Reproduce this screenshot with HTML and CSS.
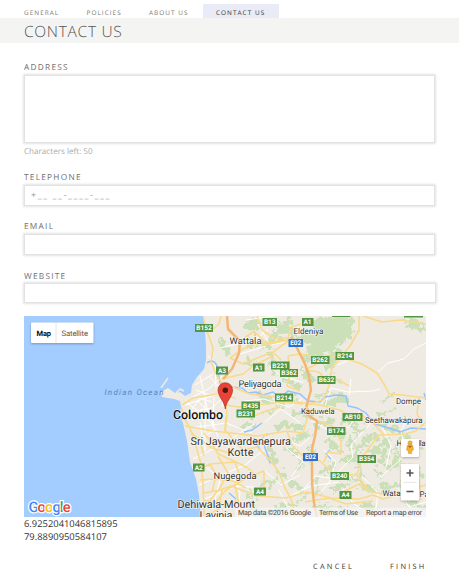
FILE: index.html
```html
<!DOCTYPE html>
<html lang="en">
<head>
<meta charset="utf-8">
<title>Contact us</title>
<link rel="stylesheet" href="styles.css">
</head>
<body>
<nav class="tabs">
  <a class="tab tab-general">GENERAL</a>
  <a class="tab tab-policies">POLICIES</a>
  <a class="tab tab-about">ABOUT US</a>
  <a class="tab active">CONTACT US</a>
</nav>
<h1 class="title">CONTACT US</h1>
<main class="form">
  <label class="label">ADDRESS</label>
  <div class="box area"></div>
  <p class="hint">Characters left: 50</p>
  <label class="label telephone">TELEPHONE</label>
  <div class="box">+__ __-____-___</div>
  <label class="label email">EMAIL</label>
  <div class="box"></div>
  <label class="label website">WEBSITE</label>
  <div class="box wide"></div>
  <svg class="map" viewBox="24 316 402 201" width="402" height="201">
    <defs>
      <filter id="rough" x="-5%" y="-5%" width="110%" height="110%">
        <feTurbulence type="fractalNoise" baseFrequency=".16" numOctaves="3" seed="7"/>
        <feDisplacementMap in="SourceGraphic" scale="16" xChannelSelector="R" yChannelSelector="G"/>
      </filter>
      <clipPath id="land-clip"><path id="land" d="M203 316L205 331L206 346L206 360L204 369L197 377L192 385L191 393L185 396L180 392L175 393L168 388L161 392L162 397L174 399L180 401L181 407L180 414L183 423L187 441L190 462L196 479L199 495L201 517H426V316Z"/></clipPath>
    </defs>
    <rect class="sea" x="24" y="316" width="402" height="201"/>
    <use href="#land" class="land"/>
    <path class="jetty" d="M161 388L168 378M176 393L180 389L184 391"/>
    <g clip-path="url(#land-clip)">
      <g class="park" filter="url(#rough)">
        <path stroke-width="18" d="M320 326L342 322M318 346L346 331"/>
        <path stroke-width="9" d="M249 325L256 323M250 342L270 345M275 338L285 326M308 358L322 350M410 322L421 327M334 350L328 366M313 336L300 340M287 322L292 335"/>
        <path stroke-width="6" d="M246 360L255 366M271 357L276 374M287 380L300 387M304 372L314 382M259 397L270 401M278 404L292 398M293 412L310 416M326 404L346 397M279 426L300 426M296 440L308 435M318 425L330 421M345 420L361 430M363 442L375 435M370 452L388 443M381 425L398 431M402 437L420 447M328 442L339 450M345 460L355 455M322 473L333 465M297 469L304 459M292 482L300 490M269 450L274 462M278 471L285 477M263 484L274 481M332 489L348 483M356 480L371 489M388 467L397 460M382 488L398 485M402 465L421 473M406 502L424 507M315 507L346 512M364 505L377 509M276 508L296 505M247 508L261 511M287 448L294 453M240 428L253 424M222 343L227 351M360 448L352 462M386 452L381 463M352 436L349 447"/>
        <path stroke-width="3" d="M378 418L390 410M402 418L416 420M357 468L364 474M374 471L381 477M336 434L343 438M310 445L312 459M315 480L318 491M348 442L357 447M393 449L401 456M318 398L331 391M383 400L393 393M332 376L338 382M264 414L272 409M266 436L262 442M249 489L255 498M301 501L307 495"/>
      </g>
      <g class="street">
        <path d="M208 356L215 362L216 388M193 397L210 388L222 376M200 376L207 408L218 437M185 405L218 394L241 386M195 385L213 374M198 401L214 418M205 394L205 451M181 413L212 408L232 389M190 428L226 423L252 433M192 443L217 429M193 459L223 444L254 424M199 485L245 465L264 450M202 500L237 486L266 488M246 320L274 316M220 348L254 340L268 330M240 354L266 346M258 324L270 345L301 339M268 365L282 377L303 382M244 401L264 399L289 407L302 399M265 422L281 409L303 425M289 441L300 446L309 438M286 448L303 461L291 477M264 470L281 485L300 475M279 490L287 506L305 511M209 376L224 392L222 407M205 466L220 479L213 508M232 474L240 493L237 512M187 403L201 413L213 425M190 412L200 398L212 402M192 420L203 409M210 395L196 390M200 422L203 443M214 397L213 428"/>
        <path d="M378 372L388 363L404 359L414 349L426 343M348 392L373 391L380 389M351 379L349 395M325 406L331 388L348 392M311 420L331 432L349 427L360 410M373 421L351 445L353 457L336 474L321 492M383 428L391 446L386 467M378 479L398 462L410 450M324 450L336 462L329 483M343 489L354 504L370 514M303 490L315 476L330 478M398 488L409 507L426 502M362 476L378 493L375 516M408 417L401 431L404 446M338 365L347 361M290 496L311 486L339 482"/>
      </g>
      <path class="water" d="M207 363C213 358 217 363 218 371L220 383L230 387L242 388L248 393L256 392L263 395L273 392L280 398L288 391L300 394L308 401L320 402L325 397L337 395L346 396L348 406L357 408L366 413L374 424L389 428L400 432L411 428L426 429M257 441L264 445L268 456L270 463M244 432L252 430L262 423M254 438L260 450M229 493L236 499M331 459L326 454L330 450M424 393L426 400"/>
      <g class="road">
        <path d="M203 316L207 331L213 348L211 362L217 376L221 382M221 316L219 324L212 330M242 340L254 331L266 343L288 340M228 329L239 342M257 316L262 330L274 338L288 338L291 327L301 324M230 358L243 349L255 344L270 344L288 340M230 358L243 364L260 357L273 352L288 341M222 379L243 374L253 366L273 356M288 356L300 354L320 357L340 357M222 383L235 388L250 394L270 396L303 403L320 405L340 410L352 417L369 422M221 382L225 388L226 405L238 407L265 404L284 402L303 404M288 356L290 371L287 386L300 391M273 352L281 360M226 405L227 416L225 431M238 415L252 417L263 412L280 407M305 370L318 363L327 355"/>
        <path d="M359 316L359 330L350 346L340 358L332 368L329 386L323 400L306 405M347 359L362 364L377 373L384 384L389 394L402 395L426 398M419 398L417 414L423 426M363 316L382 322L401 320L426 324M326 376L339 380L349 386M306 370L319 372L328 383"/>
        <path d="M182 405L193 398L205 396L217 394M181 407L185 420L190 428L196 446L201 464L203 483L204 516M185 426L213 431L240 434L257 436L287 431L303 433L307 419M204 433L213 445L218 454L234 461L248 468L257 477M190 430L201 445L204 456M192 434L212 448L226 452L243 450L257 447L270 460L279 472L285 488L291 499L295 513M243 450L232 438L225 430L226 416M196 471L210 464L222 463L235 462M200 480L215 479L233 481L246 488M204 493L220 490L231 486L244 491L259 496L286 498L307 492L331 498L359 499L373 495L383 499L405 492L426 485M218 456L228 473L220 488L203 509M235 462L240 476L235 486L239 504L244 516M211 508L225 491L246 478L264 471L264 495M287 431L292 445L303 456M204 500L225 505L238 500M205 516L219 509L222 490M210 464L216 475L212 492M229 397L236 398"/>
        <path d="M312 459L320 461L334 474L357 475L369 491L391 496M357 475L362 457L379 435L405 434L416 431L426 422M324 462L328 452L341 454L341 442L334 427L318 421M305 502L329 498L346 504L373 501M339 494L359 484L370 492M384 435L374 424L360 414M411 464L419 480L421 500"/>
      </g>
      <path class="highway" d="M227 316L228 329L240 341L239 353L232 369L223 379M291 337L296 346L305 364L309 376L311 390L307 404L305 413L317 421L315 436L312 449L312 483L314 503L317 517"/>
    </g>
    <g class="shields">
      <rect x="195" y="324" width="18" height="8"/><rect x="262.500" y="318" width="14.500" height="8"/><rect x="302" y="318" width="11.500" height="8"/><rect x="216" y="366.500" width="12" height="8"/><rect x="253" y="363.500" width="11.500" height="8"/><rect x="271" y="361.500" width="18.500" height="8"/><rect x="280" y="369" width="18" height="8"/><rect x="311" y="356" width="18.500" height="8"/><rect x="335.500" y="352" width="18.500" height="8"/><rect x="317.500" y="376" width="18" height="8"/><rect x="275" y="393.500" width="18" height="8"/><rect x="241.500" y="401.500" width="18.500" height="8"/><rect x="236.500" y="409.500" width="18.500" height="8"/><rect x="342.500" y="413" width="20" height="8"/><rect x="327" y="427" width="18.500" height="8"/><rect x="357.500" y="455" width="18.500" height="8"/><rect x="330.500" y="472" width="18.500" height="8"/><rect x="193" y="463.500" width="11.500" height="8"/><rect x="254" y="487.500" width="12" height="8"/><rect x="339.500" y="491" width="12" height="8"/><rect x="332" y="316" width="18" height="1"/><rect x="404" y="316" width="19" height="1.500"/>
      <rect class="blue" x="288.500" y="339" width="14.500" height="8"/><rect class="blue" x="303" y="453" width="15" height="8"/>
    </g>
    <g class="shield-text">
      <text x="204" y="330.300">B152</text><text x="269.700" y="324.300">B13</text><text x="307.500" y="324.300">A1</text><text x="222" y="372.800">A3</text><text x="258.700" y="369.800">A1</text><text x="280" y="367.800">B221</text><text x="289" y="375.300">B362</text><text x="320" y="362.300">B262</text><text x="344.700" y="358.300">B214</text><text x="326.500" y="382.300">B632</text><text x="284" y="399.800">B214</text><text x="250.700" y="407.800">B435</text><text x="245.700" y="415.800">B231</text><text x="352.500" y="419.300">AB10</text><text x="336" y="433.300">B174</text><text x="366.700" y="461.300">B354</text><text x="339.700" y="478.300">B240</text><text x="198.700" y="469.800">A2</text><text x="260" y="493.800">A4</text><text x="345.500" y="497.300">A4</text><text x="295.700" y="345.300">E02</text><text x="310.500" y="459.300">E02</text>
    </g>
    <text class="ocean" x="104.500" y="395" textLength="59">Indian Ocean</text>
    <g class="place">
      <text x="229.500" y="343.500" font-size="9.300" textLength="32">Wattala</text>
      <text x="238.500" y="387" font-size="9.300" textLength="43">Peliyagoda</text>
      <text x="293.500" y="333.500" font-size="8.200" textLength="30">Eldeniya</text>
      <text class="city" x="173" y="418.500" font-size="12.500" textLength="50">Colombo</text>
      <text x="190.500" y="445.300" font-size="10.900" textLength="100.500">Sri Jayawardenepura</text>
      <text x="227.500" y="456" font-size="10.900" textLength="26">Kotte</text>
      <text x="213.500" y="479" font-size="9.300" textLength="43">Nugegoda</text>
      <text x="177.500" y="508.300" font-size="10.900" textLength="77.500">Dehiwala-Mount</text>
      <text x="199.500" y="519" font-size="10.900" textLength="33">Lavinia</text>
      <text x="301" y="413.500" font-size="8" textLength="33.500">Kaduwela</text>
      <text x="396" y="404" font-size="8" textLength="25">Dompe</text>
      <text x="365" y="422.800" font-size="8" textLength="57.500">Seethawakapura</text>
      <text x="396.500" y="445.500" font-size="8">H</text><text x="415" y="445.500" font-size="8" textLength="10.500">ella</text>
      <text x="382.500" y="495.800" font-size="8" textLength="18">Wata</text><text x="419.500" y="497" font-size="8">Pa</text>
    </g>
    <path class="pin" d="M225.300 409C224.500 401 218 397 218 390A7.300 7.300 0 0 1 232.600 390C232.600 397 226 401 225.300 409Z"/>
    <circle class="pin-dot" cx="225.300" cy="390.300" r="2.700"/>
    <rect class="credit" x="235" y="507.500" width="191" height="9.500"/>
    <g class="credit-text">
      <text x="238" y="514.500" textLength="73">Map data ©2016 Google</text>
      <text x="319" y="514.500" textLength="39">Terms of Use</text>
      <text x="366" y="514.500" textLength="56">Report a map error</text>
    </g>
    <g class="control">
      <rect x="31" y="322.500" width="62.500" height="20.500" rx="1"/>
      <rect x="401" y="439" width="18" height="18" rx="1"/>
      <rect x="401" y="464" width="18" height="36.500" rx="1"/>
    </g>
    <path class="divider" d="M56 323V343M403.500 482.300H416.500"/>
    <text class="type-on" x="36.500" y="335.500" textLength="14.500">Map</text>
    <text class="type-off" x="61.500" y="335.500" textLength="26.500">Satellite</text>
    <path class="zoom" d="M406.500 473H413.500M410 469.500V476.500M406.500 491.500H413.500"/>
    <path class="man" d="M407.200 445.500Q410 443.800 412.800 445.500L413.500 450L412 450.500L411.600 453.500H408.400L408 450.500L406.500 450Z"/>
    <circle class="man" cx="410" cy="443" r="2.200"/>
    <path class="man-shade" d="M408 446L410 448L412 446"/>
    <text class="logo" x="28.500" y="512" textLength="42"><tspan class="g-blue">G</tspan><tspan class="g-red">o</tspan><tspan class="g-yellow">o</tspan><tspan class="g-blue">g</tspan><tspan class="g-green">l</tspan><tspan class="g-red">e</tspan></text>
  </svg>
  <p class="coord">6.9252041046815895</p>
  <p class="coord">79.8890950584107</p>
</main>
<footer class="actions"><span class="action cancel">CANCEL</span><span class="action">FINISH</span></footer>
</body>
</html>
```
FILE: styles.css
```css
* { box-sizing: border-box; }
body { margin: 0; height: 584px; overflow: hidden; background: #fff; font-family: "Open Sans", sans-serif; color: #777; text-rendering: geometricPrecision; }
p { margin: 0; }
.tabs { display: flex; height: 18px; padding: 4px 0 0 24px; }
.tab { font-size: 6.400px; line-height: 17px; letter-spacing: 1.050px; height: 14px; white-space: nowrap; }
.tab-general, .tab-policies { width: 62.500px; }
.tab-about { width: 54px; }
.active { width: 76px; padding-left: 13px; background: #e9ebf6; color: #333; }
.title { margin: 0; height: 25px; padding-left: 24px; background: #f4f4f2; font-size: 15.500px; line-height: 26px; font-weight: 300; letter-spacing: .7px; color: #555; }
.form { display: flex; flex-direction: column; align-items: flex-start; padding: 18px 0 0 24px; }
.label { height: 14px; font-size: 8.300px; line-height: 14px; letter-spacing: 1.250px; color: #707070; }
.box { width: 411px; height: 21px; padding-left: 6px; border: 1px solid #e2e2e2; box-shadow: 0 0 2px 1px #e4e4e4; font-size: 8.800px; line-height: 19px; letter-spacing: 1.650px; color: #999; }
.area { height: 68px; }
.hint { height: 12px; margin-top: 2px; font-size: 8.100px; line-height: 14px; color: #aaa; }
.telephone { margin-top: 13px; height: 15px; line-height: 15px; }
.email { margin-top: 14px; }
.website { margin-top: 14px; line-height: 15px; }
.wide { width: 412px; height: 20px; }
.map { display: block; margin-top: 13px; font-family: Roboto, sans-serif; }
.coord { height: 13px; font-size: 9.400px; line-height: 13px; color: #333; }
.actions { display: flex; padding: 18px 0 0 313px; }
.action { font-size: 7.400px; line-height: 13px; letter-spacing: 2.250px; color: #333; }
.cancel { width: 77px; }
.sea { fill: #a3ccff; }
.land { fill: #efebe2; }
.jetty { fill: none; stroke: #efebe2; stroke-width: 1.500; }
.park { fill: none; stroke: #cbdfb9; stroke-linecap: round; }
.street path { fill: none; stroke: #fff; stroke-width: 1; }
.water { fill: none; stroke: #92c2ff; stroke-width: 1.400; }
.road path { fill: none; stroke: #f9da8c; stroke-width: 1.600; stroke-linejoin: round; }
.highway { fill: none; stroke: #f4b673; stroke-width: 2.500; stroke-linejoin: round; }
.shields rect { fill: #519641; }
.shields .blue { fill: #2b6fca; }
.shield-text { fill: #fff; font-size: 6.500px; font-weight: 700; text-anchor: middle; }
.place { fill: #333; stroke: #fff; stroke-width: 1.500px; stroke-opacity: .7; paint-order: stroke; }
.city { fill: #111; font-weight: 500; }
.ocean { fill: #5486bd; font-size: 8px; font-style: italic; }
.pin { fill: #ea4335; stroke: #982b22; stroke-width: .6; }
.pin-dot { fill: #4d1511; }
.credit { fill: #f5f5f5; opacity: .75; }
.credit-text { fill: #444; font-size: 7.200px; }
.control { fill: #fff; filter: drop-shadow(0 1px 1px #0004); }
.divider { stroke: #e6e6e6; }
.type-on { fill: #111; font-size: 7.500px; font-weight: 700; }
.type-off { fill: #555; font-size: 7.700px; }
.zoom { stroke: #555; stroke-width: 1.600; }
.man { fill: #f3b331; stroke: #bb811c; stroke-width: .4; }
.man-shade { fill: #a66d16; }
.logo { font-size: 14.500px; font-weight: 500; stroke: #fff; stroke-width: 2.500px; paint-order: stroke; stroke-linejoin: round; }
.g-blue { fill: #4285f4; }
.g-red { fill: #ea4335; }
.g-yellow { fill: #fbbc05; }
.g-green { fill: #34a853; }
```
